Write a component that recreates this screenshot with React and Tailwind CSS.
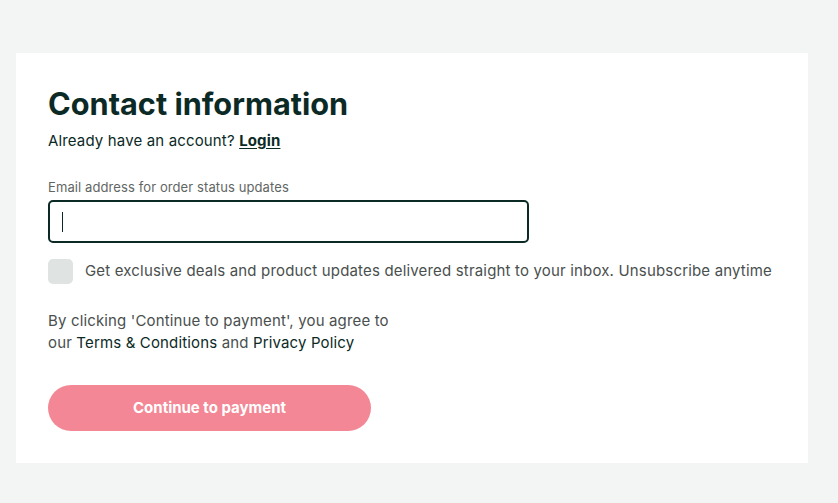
export default function App() {
  return (
    <div className="min-h-screen w-full bg-[#f3f4f4] pt-[53px] px-4" style={{ fontFamily: 'Inter, "Noto Sans", sans-serif' }}>
      <div className="w-[792px] h-[410px] bg-white px-8 pt-[29px]">
        <h1 className="text-[30.7px] leading-[44px] font-bold text-[#0c2a25]">Contact information</h1>
        <p className="mt-[4px] text-[15px] leading-[22px] tracking-[0.15px] text-[#0c2a25]">
          Already have an account? <a href="#" className="font-bold underline underline-offset-2">Login</a>
        </p>

        <label className="block mt-[26px] text-[13px] leading-[18px] tracking-[0.1px] text-[#5f6664]">Email address for order status updates</label>
        <div className="mt-[4px] w-[481px] h-[43px] rounded-[5px] border-2 border-[#0c2a25] flex items-center px-[12px]">
          <span className="w-px h-[20px] bg-[#0c2a25]" />
        </div>

        <div className="mt-[16px] flex items-center gap-3">
          <span className="w-[25px] h-[25px] rounded-[5px] bg-[#dfe3e2]" />
          <span className="text-[15px] tracking-[0.17px] text-[#4a4f4e]">Get exclusive deals and product updates delivered straight to your inbox. Unsubscribe anytime</span>
        </div>

        <p className="mt-[26px] text-[15px] leading-[22px] tracking-[0.15px] text-[#4a4f4e]">
          By clicking 'Continue to payment', you agree to
          <br />
          our <a href="#" className="text-[#0c2a25]">Terms &amp; Conditions</a> and <a href="#" className="text-[#0c2a25]">Privacy Policy</a>
        </p>

        <button className="mt-[31px] w-[323px] h-[46px] rounded-full bg-[#f38795] text-white text-[15px] font-bold">
          Continue to payment
        </button>
      </div>
    </div>
  )
}
